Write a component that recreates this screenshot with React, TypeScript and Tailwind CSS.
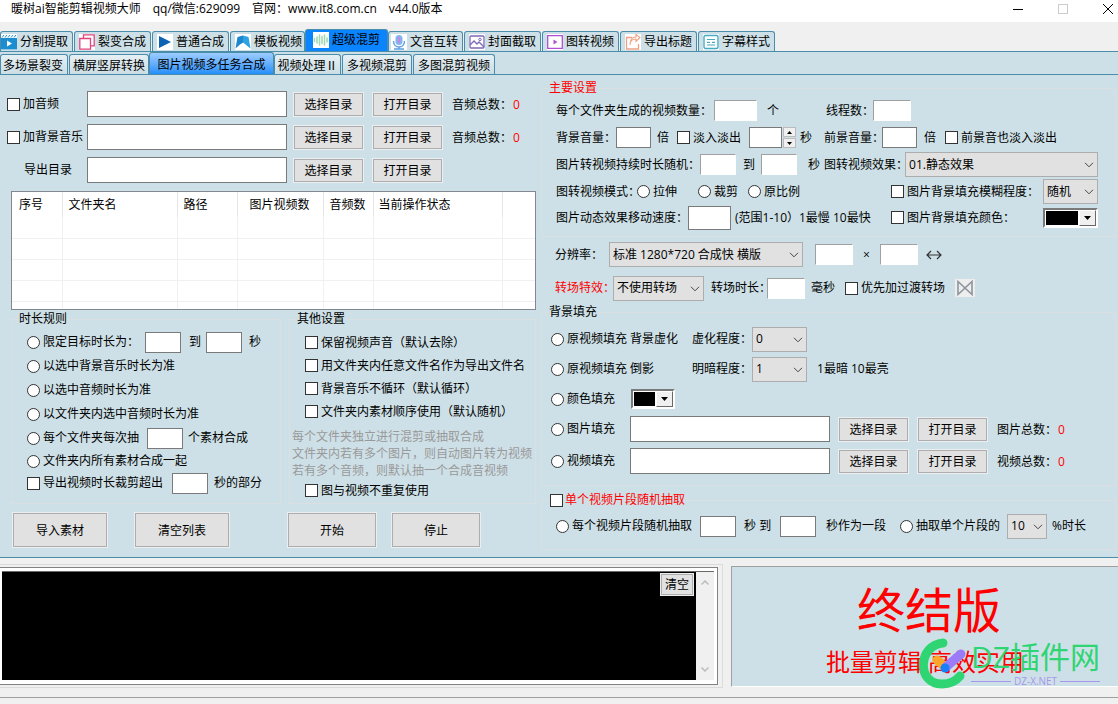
import type { ReactNode } from "react";
import clsx from "clsx";

const EDGE = "border-[#4a8dab]";

/* ---------- Controles básicos ---------- */

function Tick({
  type = "checkbox",
  name,
  label,
  className,
}: {
  type?: "checkbox" | "radio";
  name?: string;
  label: string;
  className?: string;
}) {
  return (
    <label className={clsx("flex items-center gap-[3px] whitespace-nowrap", className)}>
      <input
        type={type}
        name={name}
        className={clsx(
          "size-[13px] shrink-0 appearance-none border border-[#333] bg-white checked:bg-[#0078d7]",
          type === "radio" && "rounded-full",
        )}
      />
      {label}
    </label>
  );
}

function Box({ label, className, sunken }: { label: string; className?: string; sunken?: boolean }) {
  return (
    <input
      type="text"
      aria-label={label}
      className={clsx(
        "h-[21px] shrink-0 border bg-white px-1 outline-none",
        sunken ? "border-t-[#a0a0a0] border-r-white border-b-white border-l-[#a0a0a0]" : "border-[#7a7a7a]",
        className,
      )}
    />
  );
}

function PathBox({ label }: { label: string }) {
  return (
    <input
      type="text"
      aria-label={label}
      className="h-[26px] w-[200px] shrink-0 border border-[#7a7a7a] bg-white px-1 outline-none"
    />
  );
}

function Btn({ children, className }: { children: ReactNode; className?: string }) {
  return (
    <button
      type="button"
      className={clsx(
        "shrink-0 border border-[#adadad] bg-[#e1e1e1] pt-px ring-1 ring-[#ebeff1] hover:bg-[#e5f1fb]",
        className,
      )}
    >
      {children}
    </button>
  );
}

/** Par de botones "elegir / abrir" carpeta */
function FolderButtons() {
  return (
    <>
      <Btn className="h-[23px] w-[69px]">选择目录</Btn>
      <Btn className="ml-[10px] h-[23px] w-[69px]">打开目录</Btn>
    </>
  );
}

function Total({ label }: { label: string }) {
  return (
    <span className="ml-[10px] flex gap-px pt-[2px] whitespace-nowrap">
      {label}
      <output className="text-[#f00]">0</output>
    </span>
  );
}

function Pick({ label, value, className }: { label: string; value: string; className?: string }) {
  return (
    <span className={clsx("relative flex h-[25px] shrink-0", className)}>
      <select
        aria-label={label}
        className="w-full appearance-none border border-[#adadad] bg-[#e1e1e1] pl-[3px] outline-none"
      >
        <option>{value}</option>
      </select>
      <svg
        viewBox="0 0 10 6"
        className="pointer-events-none absolute top-[10px] right-1 h-[6px] w-[10px] fill-none stroke-[#444]"
      >
        <path d="M1 .8 5 4.8 9 .8" />
      </svg>
    </span>
  );
}

function ColorPick({ label, className }: { label: string; className?: string }) {
  return (
    <button
      type="button"
      aria-label={label}
      className={clsx(
        "flex h-5 shrink-0 border-2 border-t-[#7a7a7a] border-r-white border-b-white border-l-[#7a7a7a] bg-white",
        className,
      )}
    >
      <span className="m-px h-[14px] flex-1 bg-black" />
      <span className="flex h-4 w-[17px] items-center justify-center border border-t-white border-r-[#696969] border-b-[#696969] border-l-white bg-[#f0f0f0]">
        <svg viewBox="0 0 7 4" className="h-1 w-[7px]">
          <path d="M0 0h7L3.500 4z" />
        </svg>
      </span>
    </button>
  );
}

function Group({ legend, className, children }: { legend: ReactNode; className?: string; children: ReactNode }) {
  return (
    <fieldset className={clsx("min-w-0 border border-[#dadfe1]", className)}>
      <legend className="ml-[6px] h-4 px-px leading-4">{legend}</legend>
      {children}
    </fieldset>
  );
}

function Row({ className, children }: { className: string; children: ReactNode }) {
  return <div className={clsx("flex items-center whitespace-nowrap", className)}>{children}</div>;
}

/* ---------- Iconos de las pestañas ---------- */

const icons = {
  split: (
    <>
      <path d="M1 3.500 3 1M4 3.500 6 1M7 3.500 9 1M10 3.500 12 1M13 3.500 15 1" stroke="#1c8ed0" />
      <path d="M0 4h16v11.500H0z" fill="#1c8ed0" />
      <path d="M6 6.500v6l5-3z" fill="#fff" />
    </>
  ),
  fission: (
    <>
      <path d="M4.500 4V.8h10.700v11H12" fill="none" stroke="#e0447c" strokeWidth="1.300" />
      <path d="M.8 4.500h10.700v10.700H.8z" fill="none" stroke="#e0447c" strokeWidth="1.300" />
    </>
  ),
  play: <path d="M2 2v12l12-6z" fill="#0d62b4" />,
  template: (
    <>
      <path d="M.5 14.500 2.500 3 8 1.500V9l-3 1.500z" fill="#1d86cf" />
      <path d="M8 1.500 13.500 3l2 11.500L11 11 8 9z" fill="#2ea3e4" />
      <path d="M5 16v-5l3-2.500L11 11v5z" fill="#fff" />
    </>
  ),
  wave: (
    <path
      d="M1.500 6.500v3M4 5v6M6.500 3v10M9 4.500v7M11.500 3v10M14 6v4"
      stroke="#a3d9b4"
      strokeWidth="1.600"
      strokeLinecap="round"
    />
  ),
  mic: (
    <>
      <rect x="4.500" y="1" width="7" height="10" rx="3.500" fill="#7db7f0" />
      <path d="M6.500 4.500h3M6.500 7h3M8 2.500v7" stroke="#e07adb" />
      <path d="M2.500 7c0 8 11 8 11 0M8 13v2M3 15h10" stroke="#5c9ee0" strokeWidth="1.400" fill="none" />
    </>
  ),
  cover: (
    <>
      <rect x="1" y="2" width="14" height="12" rx="1" fill="none" stroke="#7d69b5" strokeWidth="1.300" />
      <path d="M1 11l4-4 3 3 2-2 5 5" fill="none" stroke="#7d69b5" strokeWidth="1.300" />
      <circle cx="11" cy="5.500" r="1.200" fill="none" stroke="#7d69b5" />
    </>
  ),
  movie: (
    <>
      <path d="M.7 1.700h14.600v12.600H.7z" fill="none" stroke="#b34fd0" strokeWidth="1.300" />
      <path d="M6.500 5.500v5l4-2.500z" fill="#b34fd0" />
    </>
  ),
  share: (
    <>
      <path d="M7 3.500H1.500v11.500h12V10" fill="none" stroke="#f0a184" strokeWidth="1.300" />
      <path d="M5 11c0-4 2-6 6-6V7.500l4-4-4-3V3C6 3 5 7 5 11z" fill="none" stroke="#f0a184" strokeWidth="1.100" />
    </>
  ),
  subtitle: (
    <>
      <rect x="1" y="1.500" width="14" height="13" rx="1.500" fill="none" stroke="#48acc0" strokeWidth="1.400" />
      <path d="M4 5.500h8M4 8.300h3M9 8.300h3M4 11h8" stroke="#48acc0" strokeWidth="1.200" />
    </>
  ),
};

const tabs: { icon: keyof typeof icons; label: string; box: string; active?: boolean }[] = [
  { icon: "split", label: "分割提取", box: "w-[73px]" },
  { icon: "fission", label: "裂变合成", box: "w-[77px] pl-1" },
  { icon: "play", label: "普通合成", box: "w-[77px] pl-1" },
  { icon: "template", label: "模板视频", box: "w-[75px] pl-1" },
  { icon: "wave", label: "超级混剪", box: "-ml-px w-[83px] pl-[7px]", active: true },
  { icon: "mic", label: "文音互转", box: "-ml-px w-[75px] pl-[2px]" },
  { icon: "cover", label: "封面截取", box: "w-[77px] pl-1" },
  { icon: "movie", label: "图转视频", box: "w-[77px] pl-1" },
  { icon: "share", label: "导出标题", box: "w-[77px] pl-1" },
  { icon: "subtitle", label: "字幕样式", box: "w-[77px] pl-1" },
];

const subTabs = [
  { label: "多场景裂变", box: "w-[68px] pr-[2px]" },
  { label: "横屏竖屏转换", box: "w-[80px]" },
  { label: "图片视频多任务合成", box: "-ml-px w-[125px]", active: true },
  { label: "视频处理Ⅱ", box: "-ml-px w-[67px]" },
  { label: "多视频混剪", box: "w-[70px]" },
  { label: "多图混剪视频", box: "w-[82px]" },
];

function TitleBar() {
  return (
    <header className="flex h-[22px] justify-between bg-white">
      <h1 className="flex h-[18px] items-center gap-3 pl-[11px] whitespace-nowrap">
        <span>暖树ai智能剪辑视频大师</span>
        <span>qq/微信:629099</span>
        <span>官网：www.it8.com.cn</span>
        <span>v44.0版本</span>
      </h1>
      <div className="flex h-[18px] gap-[25px]">
        <button type="button" aria-label="最小化" className="grid w-5 place-items-center">
          <span className="h-px w-[10px] bg-black" />
        </button>
        <button type="button" aria-label="最大化" className="grid w-5 place-items-center">
          <span className="size-[10px] border border-[#ccc]" />
        </button>
        <button type="button" aria-label="关闭" className="grid w-5 place-items-center">
          <svg viewBox="0 0 10 10" className="size-[10px] stroke-black">
            <path d="M0 0l10 10M10 0 0 10" />
          </svg>
        </button>
      </div>
    </header>
  );
}

function Tabs() {
  return (
    <>
      <nav className={clsx("flex h-[30px] items-end gap-px border-b", EDGE)}>
        {tabs.map((t) => (
          <button
            key={t.label}
            type="button"
            className={clsx(
              "flex items-center gap-[3px] rounded-t-[3px] border border-b-0 whitespace-nowrap",
              EDGE,
              t.active ? "h-[22px] bg-[#0a84ff] pb-px" : "h-5 bg-[#cee0e7]",
              t.box,
            )}
          >
            <svg viewBox="0 0 16 16" className="size-4 shrink-0 bg-white">
              {icons[t.icon]}
            </svg>
            {t.label}
          </button>
        ))}
      </nav>
      <nav className={clsx("flex h-[23px] items-end gap-px border-b font-['Noto_Sans_CJK_SC',sans-serif]", EDGE)}>
        {subTabs.map((t) => (
          <button
            key={t.label}
            type="button"
            className={clsx(
              "rounded-t-[3px] border border-b-0 whitespace-nowrap",
              EDGE,
              t.active
                ? "h-[22px] bg-linear-to-b from-[#9cccff] to-[#1f8ffa]"
                : "h-5 bg-linear-to-b from-[#e6f0f4] to-[#cbdde4]",
              t.box,
            )}
          >
            {t.label}
          </button>
        ))}
      </nav>
    </>
  );
}

/* ---------- Columna izquierda ---------- */

const columns = [
  { label: "序号", box: "w-[50px] pl-[7px]" },
  { label: "文件夹名", box: "w-[115px] pl-[6px]" },
  { label: "路径", box: "w-[60px] pl-[6px]" },
  { label: "图片视频数", box: "w-[86px] pl-3" },
  { label: "音频数", box: "w-[50px] pl-[6px]" },
  { label: "当前操作状态", box: "w-[129px] pl-[5px]" },
];

function FileTable() {
  return (
    <div className="mt-2 ml-[11px] h-[119px] w-[525px] overflow-hidden border border-[#828790] bg-white">
      <table className="w-full table-fixed border-collapse text-left">
        <thead>
          <tr className="h-[25px]">
            {columns.map((c) => (
              <th key={c.label} className={clsx("border-r border-[#e5e5e5] font-normal whitespace-nowrap", c.box)}>
                {c.label}
              </th>
            ))}
            <th />
          </tr>
        </thead>
        <tbody>
          {[0, 1, 2, 3].map((r) => (
            <tr key={r} className="h-[21px] border-b border-[#f0f0f0]">
              {columns.map((c) => (
                <td key={c.label} className="border-r border-[#f0f0f0]" />
              ))}
              <td />
            </tr>
          ))}
          <tr className="h-[10px]">
            {columns.map((c) => (
              <td key={c.label} className="border-r border-[#f0f0f0]" />
            ))}
            <td />
          </tr>
        </tbody>
      </table>
    </div>
  );
}

function LeftPane() {
  return (
    <section className="pt-4">
      <div className="flex flex-col gap-[7px]">
        <Row className="h-[26px]">
          <Tick label="加音频" className="w-[87px] pl-[7px]" />
          <PathBox label="音频目录" />
          <span className="w-[7px]" />
          <FolderButtons />
          <Total label="音频总数：" />
        </Row>
        <Row className="h-[26px]">
          <Tick label="加背景音乐" className="w-[87px] pl-[7px]" />
          <PathBox label="背景音乐目录" />
          <span className="w-[7px]" />
          <FolderButtons />
          <Total label="音频总数：" />
        </Row>
        <Row className="h-[26px]">
          <span className="w-[87px] pl-6">导出目录</span>
          <PathBox label="导出目录" />
          <span className="w-[7px]" />
          <FolderButtons />
        </Row>
      </div>

      <FileTable />

      <div className="flex gap-2 pt-px pl-[11px]">
        <Group legend="时长规则" className="h-[193px] w-[270px]">
          <div className="pt-[3px] pl-[15px]">
            <Row className="h-6">
              <Tick type="radio" name="rule" label="限定目标时长为：" />
              <Box label="最短时长" className="ml-[6px] w-9" />
              <span className="ml-2">到</span>
              <Box label="最长时长" className="ml-[5px] w-9" />
              <span className="ml-[7px]">秒</span>
            </Row>
            <Row className="h-6">
              <Tick type="radio" name="rule" label="以选中背景音乐时长为准" />
            </Row>
            <Row className="h-6">
              <Tick type="radio" name="rule" label="以选中音频时长为准" />
            </Row>
            <Row className="h-6">
              <Tick type="radio" name="rule" label="以文件夹内选中音频时长为准" />
            </Row>
            <Row className="h-6">
              <Tick type="radio" name="rule" label="每个文件夹每次抽" />
              <Box label="素材个数" className="ml-2 w-9" />
              <span className="ml-[5px]">个素材合成</span>
            </Row>
            <Row className="h-[22px]">
              <Tick type="radio" name="rule" label="文件夹内所有素材合成一起" />
            </Row>
            <Row className="h-[22px]">
              <Tick label="导出视频时长裁剪超出" />
              <Box label="裁剪秒数" className="ml-[9px] w-9" />
              <span className="ml-[6px]">秒的部分</span>
            </Row>
          </div>
        </Group>

        <Group legend="其他设置" className="h-[193px] w-[247px]">
          <div className="pt-1 pl-[15px]">
            <Row className="h-[23px]">
              <Tick label="保留视频声音（默认去除）" />
            </Row>
            <Row className="h-[23px]">
              <Tick label="用文件夹内任意文件名作为导出文件名" />
            </Row>
            <Row className="h-[23px]">
              <Tick label="背景音乐不循环（默认循环）" />
            </Row>
            <Row className="h-[23px]">
              <Tick label="文件夹内素材顺序使用（默认随机）" />
            </Row>
            <p className="-ml-[13px] pt-[5px] leading-[17px] whitespace-nowrap text-[#999]">
              每个文件夹独立进行混剪或抽取合成
              <br />
              文件夹内若有多个图片，则自动图片转为视频
              <br />
              若有多个音频，则默认抽一个合成音视频
            </p>
            <Row className="h-[23px]">
              <Tick label="图与视频不重复使用" />
            </Row>
          </div>
        </Group>
      </div>

      <div className="flex pt-[9px] pl-[13px]">
        <Btn className="h-[34px] w-[94px]">导入素材</Btn>
        <Btn className="ml-7 h-[34px] w-[94px]">清空列表</Btn>
        <Btn className="ml-[59px] h-[34px] w-[88px]">开始</Btn>
        <Btn className="ml-4 h-[34px] w-[88px]">停止</Btn>
      </div>
    </section>
  );
}

/* ---------- Columna derecha ---------- */

function MainSettings() {
  return (
    <Group legend={<span className="text-[#f00]">主要设置</span>} className="h-[157px]">
      <div className="pt-px pl-[14px]">
        <Row className="h-[27px]">
          <span>每个文件夹生成的视频数量：</span>
          <Box sunken label="视频数量" className="ml-[2px] w-[43px]" />
          <span className="ml-[10px]">个</span>
          <span className="ml-[47px]">线程数：</span>
          <Box sunken label="线程数" className="-ml-px w-[38px]" />
        </Row>
        <Row className="h-[27px]">
          <span>背景音量：</span>
          <Box label="背景音量" className="w-[35px]" />
          <span className="ml-[6px]">倍</span>
          <Tick label="淡入淡出" className="ml-2" />
          <Box label="淡入淡出秒数" className="ml-2 w-[33px]" />
          <span className="ml-px flex h-[21px] w-[13px] flex-col gap-px">
            <button type="button" aria-label="增加" className="grid flex-1 place-items-center border border-[#bbb] bg-[#f0f0f0]">
              <svg viewBox="0 0 5 3" className="h-[3px] w-[5px]">
                <path d="M0 3h5L2.500 0z" />
              </svg>
            </button>
            <button type="button" aria-label="减少" className="grid flex-1 place-items-center border border-[#bbb] bg-[#f0f0f0]">
              <svg viewBox="0 0 5 3" className="h-[3px] w-[5px]">
                <path d="M0 0h5L2.500 3z" />
              </svg>
            </button>
          </span>
          <span className="ml-1">秒</span>
          <span className="ml-3">前景音量：</span>
          <Box label="前景音量" className="-ml-[2px] w-[35px]" />
          <span className="ml-[7px]">倍</span>
          <Tick label="前景音也淡入淡出" className="ml-[9px]" />
        </Row>
        <Row className="h-[27px]">
          <span>图片转视频持续时长随机：</span>
          <Box sunken label="最短秒数" className="w-9" />
          <span className="ml-[7px]">到</span>
          <Box sunken label="最长秒数" className="ml-[6px] w-9" />
          <span className="ml-[11px]">秒</span>
          <span className="ml-1">图转视频效果：</span>
          <Pick label="图转视频效果" value="01.静态效果" className="-ml-[3px] w-[193px]" />
        </Row>
        <Row className="h-[27px]">
          <span className="w-[81px]">图转视频模式：</span>
          <Tick type="radio" name="mode" label="拉伸" />
          <Tick type="radio" name="mode" label="裁剪" className="ml-[21px]" />
          <Tick type="radio" name="mode" label="原比例" className="ml-[10px]" />
          <Tick label="图片背景填充模糊程度：" className="ml-[91px]" />
          <Pick label="模糊程度" value="随机" className="ml-1 w-[55px]" />
        </Row>
        <Row className="h-[25px]">
          <span>图片动态效果移动速度：</span>
          <input
            type="text"
            aria-label="移动速度"
            className="h-6 w-[43px] shrink-0 border border-[#7a7a7a] bg-white px-1 outline-none"
          />
          <span className="ml-1 w-[156px]">(范围1-10）1最慢 10最快</span>
          <Tick label="图片背景填充颜色：" className="w-[152px]" />
          <ColorPick label="背景填充颜色" className="w-[55px]" />
        </Row>
      </div>
    </Group>
  );
}

function BackgroundFill() {
  return (
    <Group legend="背景填充" className="mt-[3px] h-[182px]">
      <div className="pt-1 pl-[9px]">
        <Row className="h-[30px]">
          <Tick type="radio" name="fill" label="原视频填充 背景虚化" className="w-[141px]" />
          <span>虚化程度：</span>
          <Pick label="虚化程度" value="0" className="w-[55px]" />
        </Row>
        <Row className="h-[30px]">
          <Tick type="radio" name="fill" label="原视频填充 倒影" className="w-[141px]" />
          <span>明暗程度：</span>
          <Pick label="明暗程度" value="1" className="w-[55px]" />
          <span className="ml-[10px]">1最暗 10最亮</span>
        </Row>
        <Row className="h-[30px]">
          <Tick type="radio" name="fill" label="颜色填充" className="w-[80px]" />
          <ColorPick label="填充颜色" className="w-11" />
        </Row>
        <Row className="h-[30px]">
          <Tick type="radio" name="fill" label="图片填充" className="w-[79px]" />
          <PathBox label="图片目录" />
          <span className="w-[9px]" />
          <FolderButtons />
          <Total label="图片总数：" />
        </Row>
        <Row className="h-[34px]">
          <Tick type="radio" name="fill" label="视频填充" className="w-[79px]" />
          <PathBox label="视频目录" />
          <span className="w-[9px]" />
          <FolderButtons />
          <Total label="视频总数：" />
        </Row>
      </div>
    </Group>
  );
}

function RightPane() {
  return (
    <section className="pt-[5px] pr-[2px]">
      <MainSettings />

      <Row className="mt-1 h-[27px] pl-[14px]">
        <span className="w-[54px]">分辨率：</span>
        <Pick label="分辨率" value="标准 1280*720 合成快 横版" className="w-[194px]" />
        <Box sunken label="宽度" className="ml-3 w-[38px]" />
        <span className="w-[27px] text-center">×</span>
        <Box sunken label="高度" className="w-[38px]" />
        <svg viewBox="0 0 16 10" className="ml-2 h-[10px] w-4 fill-none stroke-[#333] stroke-[1.2]">
          <path d="M1 5h14M5 1 1 5l4 4M11 1l4 4-4 4" />
        </svg>
      </Row>
      <Row className="mt-[7px] h-[26px] pl-[14px]">
        <span className="w-[58px] text-[#f00]">转场特效：</span>
        <Pick label="转场特效" value="不使用转场" className="w-[91px]" />
        <span className="ml-[7px] w-[56px]">转场时长：</span>
        <Box sunken label="转场时长" className="w-[38px]" />
        <span className="ml-[6px]">毫秒</span>
        <Tick label="优先加过渡转场" className="ml-[10px]" />
        <button type="button" aria-label="转场预览" className="ml-[10px] h-[18px] w-5 bg-[#eee]">
          <svg viewBox="0 0 20 18" className="h-[18px] w-5 fill-none stroke-[#8d969d] stroke-[1.6]">
            <path d="M3 2.500v13l7-6.500zM17 2.500v13l-7-6.500z" />
          </svg>
        </button>
      </Row>

      <BackgroundFill />

      <Group
        legend={
          <label className="flex items-center gap-[2px] pl-px text-[#f00]">
            <input
              type="checkbox"
              className="size-[13px] appearance-none border border-[#333] bg-white checked:bg-[#0078d7]"
            />
            单个视频片段随机抽取
          </label>
        }
        className="mt-[6px] h-[58px]"
      >
        <Row className="h-9 pl-[14px]">
          <Tick type="radio" name="clip" label="每个视频片段随机抽取" />
          <Box label="片段最短秒数" className="ml-2 w-9" />
          <span className="ml-2 w-9">秒 到</span>
          <Box label="片段最长秒数" className="w-9" />
          <span className="ml-[10px]">秒作为一段</span>
          <Tick type="radio" name="clip" label="抽取单个片段的" className="ml-[14px]" />
          <Pick label="片段百分比" value="10" className="ml-[7px] w-10" />
          <span className="ml-[5px]">%时长</span>
        </Row>
      </Group>
    </section>
  );
}

/* ---------- Pie: consola y rótulo ---------- */

function Footer() {
  return (
    <footer className="flex gap-2 pt-[6px]">
      <div className="h-[124px] w-[723px] border border-l-0 border-[#dcdcdc] pt-[2px] pr-1">
        <div className="relative flex h-[118px] border border-l-0 border-[#828282] bg-white pt-[3px] pr-[3px] pb-1 pl-[2px]">
          <textarea
            readOnly
            aria-label="日志"
            className="h-full flex-1 resize-none border-t border-[#696969] bg-black text-white outline-none"
          />
          <div className="flex w-[18px] flex-col items-center justify-between border-t border-[#696969] bg-[#f0f0f0] py-2">
            <button type="button" aria-label="向上">
              <svg viewBox="0 0 8 5" className="h-[5px] w-2 fill-none stroke-[#bbb] stroke-[1.5]">
                <path d="M.5 4.500 4 1l3.500 3.500" />
              </svg>
            </button>
            <button type="button" aria-label="向下">
              <svg viewBox="0 0 8 5" className="h-[5px] w-2 fill-none stroke-[#bbb] stroke-[1.5]">
                <path d="M.5 .5 4 4 7.500 .5" />
              </svg>
            </button>
          </div>
          <Btn className="absolute top-[6px] right-6 h-[21px] w-8">清空</Btn>
        </div>
      </div>

      <div className="relative mt-[2px] flex h-[121px] flex-1 flex-col items-center border border-t-[#a0a0a0] border-r-0 border-b-white border-l-[#a0a0a0] bg-[#cee0e7] pt-3 whitespace-nowrap text-[#f00]">
        <strong className="pl-2 text-[48px] leading-[62px] font-normal">终结版</strong>
        <span className="pt-1 text-2xl leading-[34px]">批量剪辑 高效实用</span>

        {/* Marca superpuesta */}
        <div className="absolute right-[18px] bottom-[-4px] flex">
          <svg viewBox="0 0 52 52" className="h-[52px] w-[52px] fill-none" strokeLinecap="round">
            <path d="M24 5C-1 7-3 46 23 46c9 0 14-3 18-8" stroke="#2fd573" strokeWidth="9" />
            <path d="M18 22l8 7" stroke="#fba62a" strokeWidth="9" />
            <path d="M27 29l15-13" stroke="#9c7bf8" strokeWidth="9" />
            <circle cx="26" cy="30" r="4.500" fill="#1580fa" />
          </svg>
          <div className="flex flex-col items-center">
            <span className="text-[30px] leading-[38px] text-[#2fd573]">DZ插件网</span>
            <span className="flex w-full items-center gap-[3px] text-[10px] leading-[10px] text-[#a795ee]">
              <i className="h-px flex-1 bg-[#a795ee]" />
              DZ-X.NET
              <i className="h-px flex-1 bg-[#a795ee]" />
            </span>
          </div>
        </div>
      </div>
    </footer>
  );
}

export default function App() {
  return (
    <div className="min-h-screen bg-[#f0f0f0] font-['Open_Sans','Noto_Sans_CJK_SC',sans-serif] text-xs leading-4 text-black">
      <TitleBar />
      <div className="bg-[linear-gradient(#f0f0f0_30px,#cee0e7_30px)]">
        <Tabs />
        <main className={clsx("grid grid-cols-[541px_minmax(0,1fr)] border-b pb-[7px]", EDGE)}>
          <LeftPane />
          <RightPane />
        </main>
      </div>
      <Footer />
      <div className="mt-[9px] h-[7px] border-t border-[#a0a0a0]" />
    </div>
  );
}
